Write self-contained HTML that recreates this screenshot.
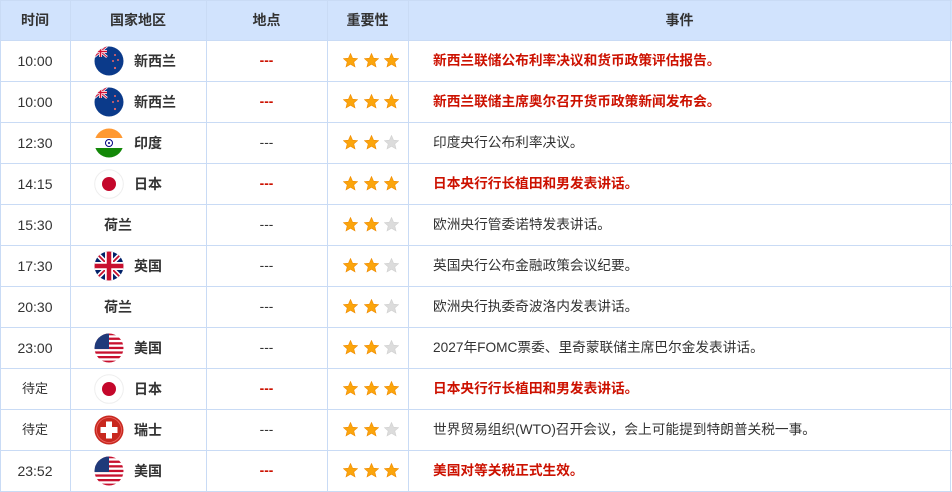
<!DOCTYPE html>
<html><head><meta charset="utf-8"><style>
*{margin:0;padding:0;box-sizing:border-box}
body{width:952px;height:491px;background:#fff;font-family:"Liberation Sans","Noto Sans CJK SC",sans-serif;font-size:13.7px;color:#333;overflow:hidden;position:relative}
.vl{position:absolute;top:0;height:491px;width:1px;background:#c9dbf5}
.hl{position:absolute;left:0;width:952px;height:1px;background:#c9dbf5}
.hd{position:absolute;top:0;left:0;width:952px;height:40px;background:#d1e3fd}
.c{position:absolute;height:40px;line-height:40px;white-space:nowrap}
.th{font-weight:bold;color:#333;text-align:center;font-size:14px}
.red{color:#cc1100;font-weight:bold}
.flag{position:absolute;width:30px;height:30px}
.st{position:absolute;width:15px;height:15px}
</style></head><body>
<div class="hd"></div>
<div class="c th" style="left:0;width:70px;top:0">时间</div>
<div class="c th" style="left:70px;width:136px;top:0">国家地区</div>
<div class="c th" style="left:206px;width:121px;top:0">地点</div>
<div class="c th" style="left:327px;width:81px;top:0">重要性</div>
<div class="c th" style="left:408px;width:543px;top:0">事件</div>

<svg width="0" height="0" style="position:absolute">
<defs>
<path id="star" d="M7.5 0.5 L9.6 5.2 L14.6 5.6 L10.8 8.9 L12 13.9 L7.5 11.2 L3 13.9 L4.2 8.9 L0.4 5.6 L5.4 5.2 Z"/>
<clipPath id="cc"><circle cx="15" cy="15" r="14.5"/></clipPath>
<g id="nz"><g clip-path="url(#cc)"><rect width="30" height="30" fill="#0b3a8a"/><path d="M0 0L13 11M13 0L0 11" stroke="#fff" stroke-width="2.5"/><path d="M0 0L13 11M13 0L0 11" stroke="#d21034" stroke-width="1"/><path d="M6.5 0V11M0 5.5H13" stroke="#fff" stroke-width="3"/><path d="M6.5 0V11M0 5.5H13" stroke="#d21034" stroke-width="1.6"/><circle cx="21" cy="9" r="1" fill="#e66"/><circle cx="24" cy="14" r="1" fill="#e66"/><circle cx="19" cy="15" r="1" fill="#e66"/><circle cx="21" cy="22" r="1.1" fill="#e66"/></g></g>
<g id="us"><g clip-path="url(#cc)"><rect width="30" height="30" fill="#fff"/><rect y="0" width="30" height="2.3" fill="#c8102e"/><rect y="4.6" width="30" height="2.3" fill="#c8102e"/><rect y="9.2" width="30" height="2.3" fill="#c8102e"/><rect y="13.8" width="30" height="2.3" fill="#c8102e"/><rect y="18.4" width="30" height="2.3" fill="#c8102e"/><rect y="23" width="30" height="2.3" fill="#c8102e"/><rect y="27.6" width="30" height="2.4" fill="#c8102e"/><rect width="15" height="16" fill="#1f3a7a"/></g></g>
<g id="jp"><circle cx="15" cy="15" r="14.3" fill="#fff" stroke="#eee" stroke-width="1"/><circle cx="15" cy="15" r="7" fill="#c4072b"/></g>
</defs></svg>

<div id="rows"></div>
<script>
var R=[
["10:00","nz","新西兰",1,3,"新西兰联储公布利率决议和货币政策评估报告。",1],
["10:00","nz","新西兰",1,3,"新西兰联储主席奥尔召开货币政策新闻发布会。",1],
["12:30","in","印度",0,2,"印度央行公布利率决议。",0],
["14:15","jp","日本",1,3,"日本央行行长植田和男发表讲话。",1],
["15:30","","荷兰",0,2,"欧洲央行管委诺特发表讲话。",0],
["17:30","uk","英国",0,2,"英国央行公布金融政策会议纪要。",0],
["20:30","","荷兰",0,2,"欧洲央行执委奇波洛内发表讲话。",0],
["23:00","us","美国",0,2,"2027年FOMC票委、里奇蒙联储主席巴尔金发表讲话。",0],
["待定","jp","日本",1,3,"日本央行行长植田和男发表讲话。",1],
["待定","ch","瑞士",0,2,"世界贸易组织(WTO)召开会议，会上可能提到特朗普关税一事。",0],
["23:52","us","美国",1,3,"美国对等关税正式生效。",1]];
var F={
nz:'<use href="#nz"/>',us:'<use href="#us"/>',jp:'<use href="#jp"/>',
in:'<g clip-path="url(#cc)"><rect width="30" height="10" fill="#ff9933"/><rect y="10" width="30" height="10" fill="#fff"/><rect y="20" width="30" height="10" fill="#138808"/><circle cx="15" cy="15" r="3.5" fill="none" stroke="#000080" stroke-width="1"/><circle cx="15" cy="15" r="1" fill="#000080"/></g>',
uk:'<g clip-path="url(#cc)"><rect width="30" height="30" fill="#012169"/><path d="M0 0L30 30M30 0L0 30" stroke="#fff" stroke-width="5"/><path d="M0 0L30 30M30 0L0 30" stroke="#c8102e" stroke-width="1.8"/><path d="M15 0V30M0 15H30" stroke="#fff" stroke-width="8"/><path d="M15 0V30M0 15H30" stroke="#c8102e" stroke-width="4.5"/></g>',
ch:'<circle cx="15" cy="15" r="14.5" fill="#c8281e"/><circle cx="15" cy="15" r="12.5" fill="none" stroke="#e66" stroke-width="0.8"/><rect x="12" y="6.5" width="6" height="17" fill="#fff"/><rect x="6.5" y="12" width="17" height="6" fill="#fff"/>'};
var h='';
for(var i=0;i<R.length;i++){var r=R[i],t=40+41*i+1;
h+='<div class="c" style="left:0;width:70px;text-align:center;top:'+t+'px;'+(r[0]=='待定'?'font-size:13px':'font-size:14px')+'">'+r[0]+'</div>';
if(r[1]){h+='<svg class="flag" viewBox="0 0 30 30" style="left:94px;top:'+(t+5)+'px">'+F[r[1]]+'</svg>';
h+='<div class="c" style="left:134px;top:'+t+'px;font-weight:bold;font-size:14px">'+r[2]+'</div>';}
else h+='<div class="c" style="left:104px;top:'+t+'px;font-weight:bold;font-size:14px">'+r[2]+'</div>';
h+='<div class="c'+(r[3]?' red':'')+'" style="left:206px;width:121px;text-align:center;top:'+t+'px">---</div>';
for(var s=0;s<3;s++)h+='<svg class="st" viewBox="0 0 15 15" style="left:'+(343+s*20.5)+'px;top:'+(t+12)+'px"><use href="#star" fill="'+(s<r[4]?'#fba50c':'#dcdcdc')+'" stroke="'+(s<r[4]?'#f08a00':'#d0d0d0')+'" stroke-width="0.6"/></svg>';
h+='<div class="c'+(r[6]?' red':'')+'" style="left:433px;top:'+t+'px">'+r[5]+'</div>';
h+='<div class="hl" style="top:'+(t+40)+'px"></div>';}
document.getElementById('rows').innerHTML=h;
</script>
<div class="hl" style="top:0"></div>
<div class="hl" style="top:40px"></div>
<div class="vl" style="left:0"></div>
<div class="vl" style="left:70px"></div>
<div class="vl" style="left:206px"></div>
<div class="vl" style="left:327px"></div>
<div class="vl" style="left:408px"></div>
<div class="vl" style="left:950px"></div>
</body></html>
